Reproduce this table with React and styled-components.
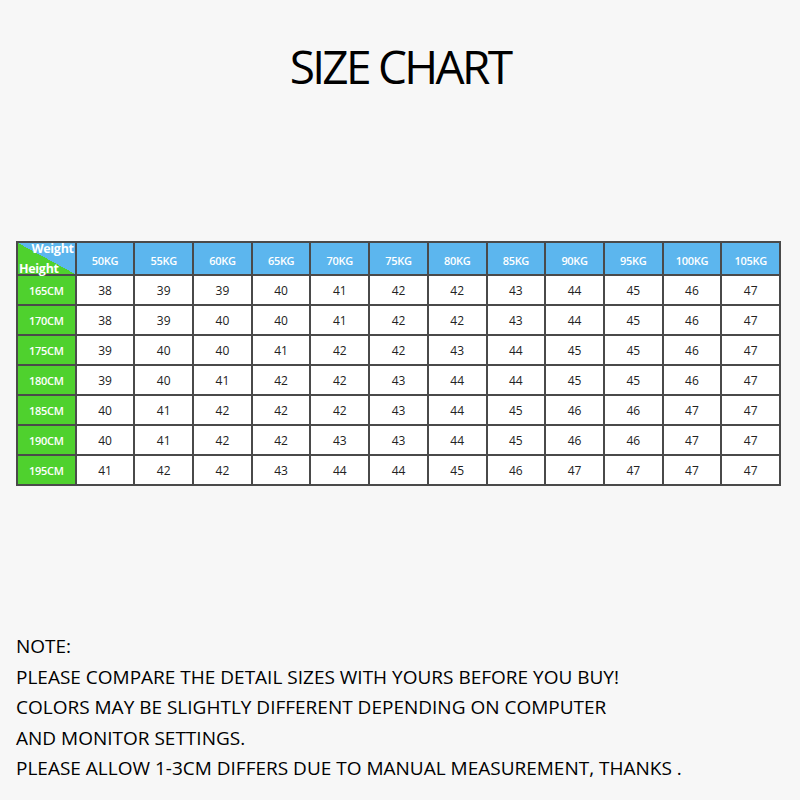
import React from "react";
import styled, { createGlobalStyle } from "styled-components";

const GlobalStyle = createGlobalStyle`
  html, body {
    margin: 0;
    padding: 0;
    background: #f7f7f7;
  }
  body {
    font-family: "Open Sans", "Noto Sans", sans-serif;
    color: #111;
  }
`;

const weights = ["50KG", "55KG", "60KG", "65KG", "70KG", "75KG", "80KG", "85KG", "90KG", "95KG", "100KG", "105KG"];

const rows = [
  ["165CM", [38, 39, 39, 40, 41, 42, 42, 43, 44, 45, 46, 47]],
  ["170CM", [38, 39, 40, 40, 41, 42, 42, 43, 44, 45, 46, 47]],
  ["175CM", [39, 40, 40, 41, 42, 42, 43, 44, 45, 45, 46, 47]],
  ["180CM", [39, 40, 41, 42, 42, 43, 44, 44, 45, 45, 46, 47]],
  ["185CM", [40, 41, 42, 42, 42, 43, 44, 45, 46, 46, 47, 47]],
  ["190CM", [40, 41, 42, 42, 43, 43, 44, 45, 46, 46, 47, 47]],
  ["195CM", [41, 42, 42, 43, 44, 44, 45, 46, 47, 47, 47, 47]],
];

const notes = [
  "NOTE:",
  "PLEASE COMPARE THE DETAIL SIZES WITH YOURS BEFORE YOU BUY!",
  "COLORS MAY BE SLIGHTLY DIFFERENT DEPENDING ON COMPUTER",
  "AND MONITOR SETTINGS.",
  "PLEASE ALLOW 1-3CM DIFFERS DUE TO MANUAL MEASUREMENT, THANKS .",
];

const App = () => {
  return (
    <Page>
      <GlobalStyle />
      <Title>SIZE CHART</Title>
      <Chart>
        <Corner>
          <span className="weight">Weight</span>
          <span className="height">Height</span>
        </Corner>
        {weights.map((w) => (
          <HeadCell key={w}>{w}</HeadCell>
        ))}
        {rows.map(([h, vals]) => (
          <React.Fragment key={h}>
            <RowLabel>{h}</RowLabel>
            {vals.map((v, i) => (
              <Cell key={i}>{v}</Cell>
            ))}
          </React.Fragment>
        ))}
      </Chart>
      <Notes>
        {notes.map((n) => (
          <div key={n}>{n}</div>
        ))}
      </Notes>
    </Page>
  );
};

export default App;

const Page = styled.div`
  width: 800px;
  height: 800px;
  padding: 0 16px;
  box-sizing: border-box;
  display: flex;
  flex-direction: column;
`;

const Title = styled.h1`
  margin: 36px 0 0;
  text-align: center;
  font-size: 46px;
  font-weight: 500;
  line-height: 60px;
  letter-spacing: -2.7px;
  color: #000;
`;

const Chart = styled.div`
  margin-top: 145px;
  width: 765px;
  display: grid;
  grid-template-columns: repeat(13, 1fr);
  grid-template-rows: 31px repeat(7, 28px);
  gap: 2px;
  padding: 2px;
  box-sizing: border-box;
  background: #4a4a4a;
`;

const HeadCell = styled.div`
  background: #5cb6ee;
  color: #fff;
  font-size: 11px;
  font-weight: 600;
  display: flex;
  align-items: center;
  justify-content: center;
  padding-top: 4px;
  box-sizing: border-box;
  letter-spacing: -0.3px;
`;

const Corner = styled.div`
  position: relative;
  background: linear-gradient(to top right, #4fd12e 50%, #5cb6ee 50%);
  color: #fff;
  font-size: 12.5px;
  font-weight: 700;
  letter-spacing: -0.3px;

  .weight {
    position: absolute;
    top: -3px;
    right: 1px;
  }

  .height {
    position: absolute;
    bottom: -3px;
    left: 1px;
  }
`;

const RowLabel = styled.div`
  background: #4fd12e;
  color: #fff;
  font-size: 11px;
  font-weight: 600;
  display: flex;
  align-items: center;
  justify-content: center;
  letter-spacing: -0.3px;
`;

const Cell = styled.div`
  background: #fff;
  color: #222;
  font-size: 12px;
  display: flex;
  align-items: center;
  justify-content: center;
`;

const Notes = styled.div`
  margin-top: 145px;
  font-size: 19px;
  line-height: 30.5px;
  letter-spacing: 0;
  color: #000;
`;
